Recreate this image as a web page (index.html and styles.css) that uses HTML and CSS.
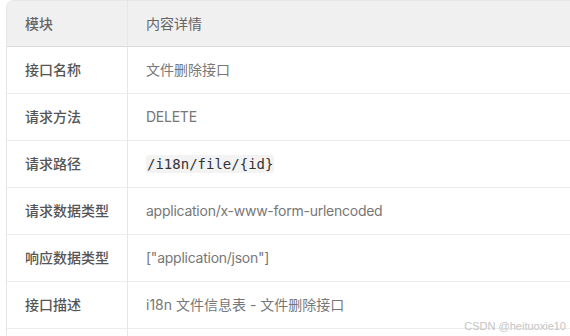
FILE: index.html
```html
<!DOCTYPE html>
<html lang="zh-CN">
<head>
  <meta charset="UTF-8" />
  <title>接口详情</title>
  <link rel="stylesheet" href="styles.css">
</head>
<body>
  <div class="page">
    <table class="api-table">
      <thead>
        <tr>
          <th class="col-key">模块</th>
          <th>内容详情</th>
        </tr>
      </thead>
      <tbody>
        <tr>
          <td class="col-key">接口名称</td>
          <td>文件删除接口</td>
        </tr>
        <tr>
          <td class="col-key">请求方法</td>
          <td class="latin">DELETE</td>
        </tr>
        <tr>
          <td class="col-key">请求路径</td>
          <td><code>/i18n/file/{id}</code></td>
        </tr>
        <tr>
          <td class="col-key">请求数据类型</td>
          <td class="latin">application/x-www-form-urlencoded</td>
        </tr>
        <tr>
          <td class="col-key">响应数据类型</td>
          <td class="latin">["application/json"]</td>
        </tr>
        <tr>
          <td class="col-key">接口描述</td>
          <td>i18n 文件信息表 - 文件删除接口</td>
        </tr>
        <tr>
          <td class="col-key"></td>
          <td></td>
        </tr>
      </tbody>
    </table>

    <!-- site watermark over the bottom right -->
    <div class="watermark">CSDN @heituoxie10</div>
  </div>
</body>
</html>
```

FILE: styles.css
```css
* { box-sizing: border-box; }
body {
  margin: 0;
  background: #fff;
  font-family: Inter, "Noto Sans CJK SC", sans-serif;
  font-size: 14px;
  color: #777;
  overflow: hidden;
}
.page {
  position: relative;
  width: 570px;
  height: 336px;
  overflow: hidden;
  padding-left: 6px;
}
.api-table {
  width: 760px;
  border-collapse: separate;
  border-spacing: 0;
  border-left: 1px solid #e6e6e6;
  border-top: 1px solid #e6e6e6;
  border-top-left-radius: 8px;
  overflow: hidden;
}
th, td {
  text-align: left;
  padding: 0 18px;
  height: 47px;
  line-height: 22px;
  border-bottom: 1px solid #ececec;
  font-weight: 400;
}
th {
  height: 46px;
  background: #f0f0f0;
  color: #666;
  border-bottom-color: #dcdcdc;
}
td.latin {
  letter-spacing: -0.25px;
}
.col-key {
  width: 121px;
  border-right: 1px solid #e6e6e6;
  color: #555;
  font-weight: 500;
}
th.col-key {
  color: #666;
}
code {
  font-family: "DejaVu Sans Mono", monospace;
  font-size: 14px;
  color: #333;
  background: #f3f3f3;
  padding: 1px 1px;
  border-radius: 3px;
}
.watermark {
  position: absolute;
  right: 4px;
  bottom: 4px;
  font-family: "Liberation Sans", sans-serif;
  font-size: 11px;
  color: #c4c4c4;
}
```
